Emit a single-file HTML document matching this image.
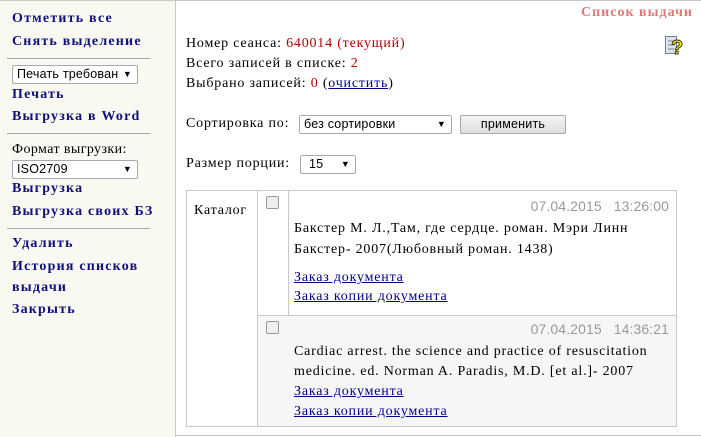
<html><head><style>
body{margin:0;width:701px;height:437px;position:relative;background:#fff;font-family:"Liberation Serif",serif;font-size:14px;letter-spacing:0.8px;overflow:hidden}
.a{position:absolute;white-space:nowrap}
#side{position:absolute;left:0;top:0;width:176px;height:437px;background:#f9f9f1;border-right:1px solid #c8c8c8;border-top:1px solid #c8c8c8;box-sizing:border-box}
.s{position:absolute;left:12px;font-weight:bold;font-size:14px;letter-spacing:1.2px;color:#10107a;white-space:nowrap}
.hr{position:absolute;left:7px;width:143px;height:1px;background:#a8a8a8}
.sel{position:absolute;border:1px solid #a9a9a9;background:#fff;font-family:"Liberation Sans",sans-serif;font-size:12.5px;letter-spacing:0.2px;box-sizing:border-box;padding-left:4px;line-height:17px;border-radius:2px}
.sel:after{content:"▼";position:absolute;right:5px;top:0;font-size:9px}
.r{color:#b00000}
a{color:#00008b}
.g{color:#999;font-family:"Liberation Sans",sans-serif;letter-spacing:0.1px}
</style></head><body>
<div style="position:absolute;left:0;top:0;width:701px;height:436px;border-top:1px solid #c8c8c8;border-bottom:1px solid #c8c8c8;border-left:1px solid #c8c8c8;box-sizing:border-box"></div>
<div id="side">
<div class="s" style="top:10px">Отметить все</div>
<div class="s" style="top:33px">Снять выделение</div>
<div class="hr" style="top:57px"></div>
<div class="sel" style="left:12px;top:64px;width:126px;height:19px;overflow:hidden;padding-right:14px">Печать требован</div>
<div class="s" style="top:86px">Печать</div>
<div class="s" style="top:108px">Выгрузка в Word</div>
<div class="hr" style="top:132px"></div>
<div class="a" style="left:12px;top:141px;letter-spacing:0.4px">Формат выгрузки:</div>
<div class="sel" style="left:12px;top:159px;width:126px;height:19px">ISO2709</div>
<div class="s" style="top:180px">Выгрузка</div>
<div class="s" style="top:203px">Выгрузка своих БЗ</div>
<div class="hr" style="top:227px"></div>
<div class="s" style="top:235px">Удалить</div>
<div class="s" style="top:258px">История списков</div>
<div class="s" style="top:279px">выдачи</div>
<div class="s" style="top:301px">Закрыть</div>
</div>
<div class="a" style="right:8px;top:5px;color:#e07878;font-weight:bold;font-size:14px;letter-spacing:1px">Список выдачи</div>
<svg class="a" style="left:664px;top:34px" width="22" height="22" viewBox="0 0 22 22"><rect x="1.5" y="2.5" width="11" height="17" fill="#dde4ee" stroke="#7080a0"/><line x1="4" y1="7" x2="10" y2="7" stroke="#7080a0"/><line x1="4" y1="11" x2="10" y2="11" stroke="#7080a0"/><line x1="4" y1="15" x2="10" y2="15" stroke="#7080a0"/><text x="7" y="20" font-family="Liberation Sans" font-weight="bold" font-size="20" fill="#f5e820" stroke="#303000" stroke-width="0.9">?</text></svg>
<div class="a" style="left:186px;top:36px">Номер сеанса: <span class="r">640014 (текущий)</span></div>
<div class="a" style="left:186px;top:56px">Всего записей в списке: <span class="r">2</span></div>
<div class="a" style="left:186px;top:76px">Выбрано записей: <span class="r">0</span> (<a href="#">очистить</a>)</div>
<div class="a" style="left:186px;top:116px">Сортировка по:</div>
<div class="sel" style="left:299px;top:115px;width:153px;height:19px">без сортировки</div>
<div class="a" style="left:460px;top:115px;width:106px;height:19px;border:1px solid #a9a9a9;background:linear-gradient(#f4f4f4,#dedede);box-sizing:border-box;text-align:center;font-family:'Liberation Sans',sans-serif;font-size:12.5px;letter-spacing:0.2px;line-height:17px;border-radius:2px">применить</div>
<div class="a" style="left:186px;top:156px">Размер порции:</div>
<div class="sel" style="left:300px;top:155px;width:56px;height:19px;padding-left:8px">15</div>
<div style="position:absolute;left:186px;top:190px;width:491px;height:237px;border:1px solid #c8c8c8;box-sizing:border-box"></div>
<div style="position:absolute;left:257px;top:190px;width:1px;height:237px;background:#c8c8c8"></div>
<div style="position:absolute;left:288px;top:190px;width:1px;height:237px;background:#c8c8c8"></div>
<div style="position:absolute;left:258px;top:315px;width:418px;height:111px;background:#f6f6f6"></div>
<div style="position:absolute;left:258px;top:315px;width:418px;height:1px;background:#c8c8c8"></div>
<div class="a" style="left:194px;top:203px">Каталог</div>
<div class="a" style="left:266px;top:196px;width:11px;height:11px;border:1px solid #999;border-radius:2px;background:#eee"></div>
<div class="a" style="left:266px;top:321px;width:11px;height:11px;border:1px solid #999;border-radius:2px;background:#eee"></div>
<div class="a g" style="right:32px;top:198px">07.04.2015&nbsp;&nbsp;&nbsp;13:26:00</div>
<div class="a" style="left:294px;top:218px;line-height:21px">Бакстер М. Л.,Там, где сердце. роман. Мэри Линн<br>Бакстер- 2007(Любовный роман. 1438)</div>
<div class="a" style="left:294px;top:268px;line-height:19px"><a href="#">Заказ документа</a><br><a href="#">Заказ копии документа</a></div>
<div class="a g" style="right:32px;top:321px">07.04.2015&nbsp;&nbsp;&nbsp;14:36:21</div>
<div class="a" style="left:294px;top:342px;line-height:20px">Cardiac arrest. the science and practice of resuscitation<br>medicine. ed. Norman A. Paradis, M.D. [et al.]- 2007</div>
<div class="a" style="left:294px;top:382px;line-height:20px"><a href="#">Заказ документа</a><br><a href="#">Заказ копии документа</a></div>
</body></html>
